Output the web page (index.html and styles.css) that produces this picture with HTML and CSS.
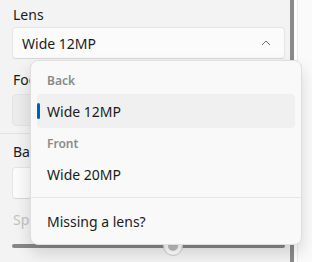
FILE: index.html
```html
<html lang="en">
<head>
    <meta charset="UTF-8">
    <title>Camera settings</title>
    <link rel="stylesheet" href="styles.css">
</head>
<body>
    <div class="window">
        <div class="pane">
            <div class="label">Lens</div>
            <div class="combo">
                <span>Wide 12MP</span>
                <svg class="chevron" width="10" height="6" viewBox="0 0 10 6">
                    <path d="M1 5 L5 1 L9 5" fill="none" stroke="#6b6b6b" stroke-width="1"/>
                </svg>
            </div>

            <!-- these labels sit under the open flyout -->
            <div class="label gap">Focus</div>
            <div class="combo grey"></div>

            <div class="divider"></div>

            <div class="label gap-small">Background</div>
            <div class="combo"></div>

            <div class="label gap muted">Speed</div>
            <div class="slider">
                <div class="track"></div>
                <div class="thumb"></div>
            </div>
        </div>
        <div class="scrollbar"></div>
        <div class="side"></div>

        <!-- lens flyout -->
        <div class="flyout">
            <div class="group">Back</div>
            <div class="item selected">Wide 12MP</div>
            <div class="group">Front</div>
            <div class="item">Wide 20MP</div>
            <div class="sep"></div>
            <div class="item">Missing a lens?</div>
        </div>
    </div>
</body>
</html>
```

FILE: styles.css
```css
* {
    box-sizing: border-box;
    font-family: 'Noto Sans', 'Open Sans', sans-serif;
}

body {
    margin: 0;
    background: #f3f3f3;
}

.window {
    position: relative;
    display: flex;
    height: 262px;
    overflow: hidden;
}

.pane {
    width: 290px;
    padding: 5px 5px 0 12px;
    background: #f3f3f3;
}

.label {
    font-size: 14px;
    line-height: 20px;
    color: #1b1b1b;
    padding-left: 1px;
    margin-bottom: 2px;
}

.gap {
    margin-top: 11px;
    margin-bottom: 4px;
}

.gap-small {
    margin-top: 8px;
    margin-bottom: 5px;
}

.muted {
    color: #c2c2c2;
}

.combo {
    display: flex;
    align-items: center;
    justify-content: space-between;
    height: 32px;
    width: 273px;
    padding: 0 13px 0 9px;
    background: #fbfbfb;
    border: 1px solid #e5e5e5;
    border-bottom-color: #d6d6d6;
    border-radius: 4px;
    font-size: 14px;
    color: #1b1b1b;
}

.combo.grey {
    background: #ececec;
    border-color: #e4e4e4;
}

.chevron {
    margin-top: -1px;
}

.divider {
    height: 1px;
    background: #e2e2e2;
    margin: 7px -5px 0 -12px;
}

.slider {
    position: relative;
    height: 20px;
    margin-top: 6px;
    width: 273px;
}

.track {
    position: absolute;
    left: 0;
    right: 0;
    top: 8px;
    height: 4px;
    border-radius: 2px;
    background: #868686;
}

.thumb {
    position: absolute;
    left: 151px;
    top: 0;
    width: 20px;
    height: 20px;
    border-radius: 50%;
    background: #ffffff;
    border: 1px solid #d0d0d0;
    box-shadow: inset 0 0 0 4px #ffffff, inset 0 0 0 10px #bdbdbd;
}

.scrollbar {
    width: 4px;
    background: #8a8a8a;
}

.side {
    flex: 1;
    background: #fafafa;
    border-left: 3px solid #fefefe;
    box-shadow: inset 1px 0 0 #ececec;
}

.flyout {
    position: absolute;
    left: 30px;
    top: 60px;
    width: 272px;
    padding: 4px 6px 6px;
    background: #f9f9f9;
    border: 1px solid #dedede;
    border-radius: 8px;
    box-shadow: 0 8px 16px rgba(0, 0, 0, 0.14);
}

.group {
    padding: 8px 10px 5px;
    font-size: 12px;
    line-height: 16px;
    font-weight: 600;
    color: #8a8a8a;
}

.item {
    position: relative;
    display: flex;
    align-items: center;
    height: 34px;
    padding-left: 10px;
    font-size: 14px;
    color: #1b1b1b;
    border-radius: 4px;
}

.item.selected {
    background: #f0f0f0;
}

.item.selected::before {
    content: "";
    position: absolute;
    left: 0;
    top: 9px;
    width: 3px;
    height: 16px;
    border-radius: 2px;
    background: #005fb8;
}

.sep {
    height: 1px;
    background: #e6e6e6;
    margin: 6px -6px;
}
```
